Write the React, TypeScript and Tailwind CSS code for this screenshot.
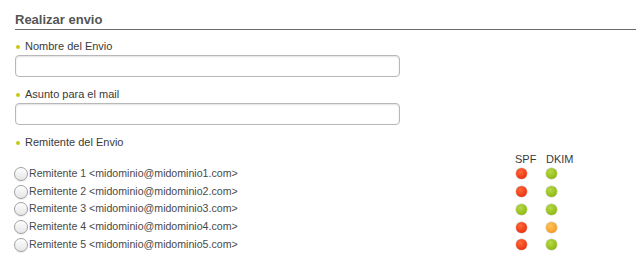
import React from "react";

type Status = "red" | "green" | "orange";

const senders: { n: number; spf: Status; dkim: Status }[] = [
  { n: 1, spf: "red", dkim: "green" },
  { n: 2, spf: "red", dkim: "green" },
  { n: 3, spf: "green", dkim: "green" },
  { n: 4, spf: "red", dkim: "orange" },
  { n: 5, spf: "red", dkim: "green" },
];

function Dot({ s }: { s: Status }) {
  const cls =
    s === "red"
      ? "bg-[radial-gradient(circle_at_40%_35%,#ff6a3a_0%,#f0401a_55%,#d83010_100%)]"
      : s === "green"
      ? "bg-[radial-gradient(circle_at_40%_35%,#b8d84a_0%,#98c21c_55%,#82a812_100%)]"
      : "bg-[radial-gradient(circle_at_40%_35%,#ffc45a_0%,#f8a632_55%,#e88c18_100%)]";
  return (
    <span
      className={`block w-[11px] h-[11px] rounded-full ${cls} shadow-[0_0_0_0.5px_rgba(90,90,90,0.35)]`}
    />
  );
}

function Label({ children, className = "" }: { children: React.ReactNode; className?: string }) {
  return (
    <div className={`flex items-center text-[11px] leading-[13px] text-[#3a3a3a] ${className}`}>
      <span className="block w-[4px] h-[4px] rounded-full bg-[#c8c81a] ml-[1px] mr-[5px]" />
      {children}
    </div>
  );
}

export default function App() {
  return (
    <div className="w-[636px] h-[268px] bg-white pl-[15px] pt-[12px] font-['Liberation_Sans',Arial,sans-serif] overflow-hidden">
      <h2 className="text-[13px] leading-[15px] font-bold text-[#555] pb-[2px] border-b border-[#6a6a6a]">
        Realizar envio
      </h2>

      <Label className="mt-[10px]">Nombre del Envio</Label>
      <input
        type="text"
        className="block mt-[2px] w-[385px] h-[22px] rounded-[4px] border border-[#b8b8b8] bg-white shadow-[inset_0_1px_2px_rgba(0,0,0,0.12)] outline-none"
      />

      <Label className="mt-[11px]">Asunto para el mail</Label>
      <input
        type="text"
        className="block mt-[2px] w-[385px] h-[22px] rounded-[4px] border border-[#b8b8b8] bg-white shadow-[inset_0_1px_2px_rgba(0,0,0,0.12)] outline-none"
      />

      <Label className="mt-[11px]">Remitente del Envio</Label>

      <div className="mt-[5px] grid grid-cols-[500px_31px_auto] text-[11px] leading-[11px] text-[#3a3a3a]">
        <div />
        <div>SPF</div>
        <div>DKIM</div>
      </div>

      {senders.map((r) => (
        <div key={r.n} className="grid grid-cols-[500px_31px_auto] items-center h-[17.75px]">
          <div className="flex items-center -ml-[1px] text-[10.6px] text-[#4a4a4a]">
            <span className="block w-[14px] h-[14px] rounded-full border border-[#a0a0a0] bg-[linear-gradient(#fdfdfd,#e6e6e6)] shadow-[inset_0_1px_1px_rgba(255,255,255,0.9),0_1px_1px_rgba(0,0,0,0.08)] mr-[1px]" />
            <span>
              Remitente {r.n} &lt;midominio@midominio{r.n}.com&gt;
            </span>
          </div>
          <div className="pl-[1px]">
            <Dot s={r.spf} />
          </div>
          <div>
            <Dot s={r.dkim} />
          </div>
        </div>
      ))}
    </div>
  );
}
